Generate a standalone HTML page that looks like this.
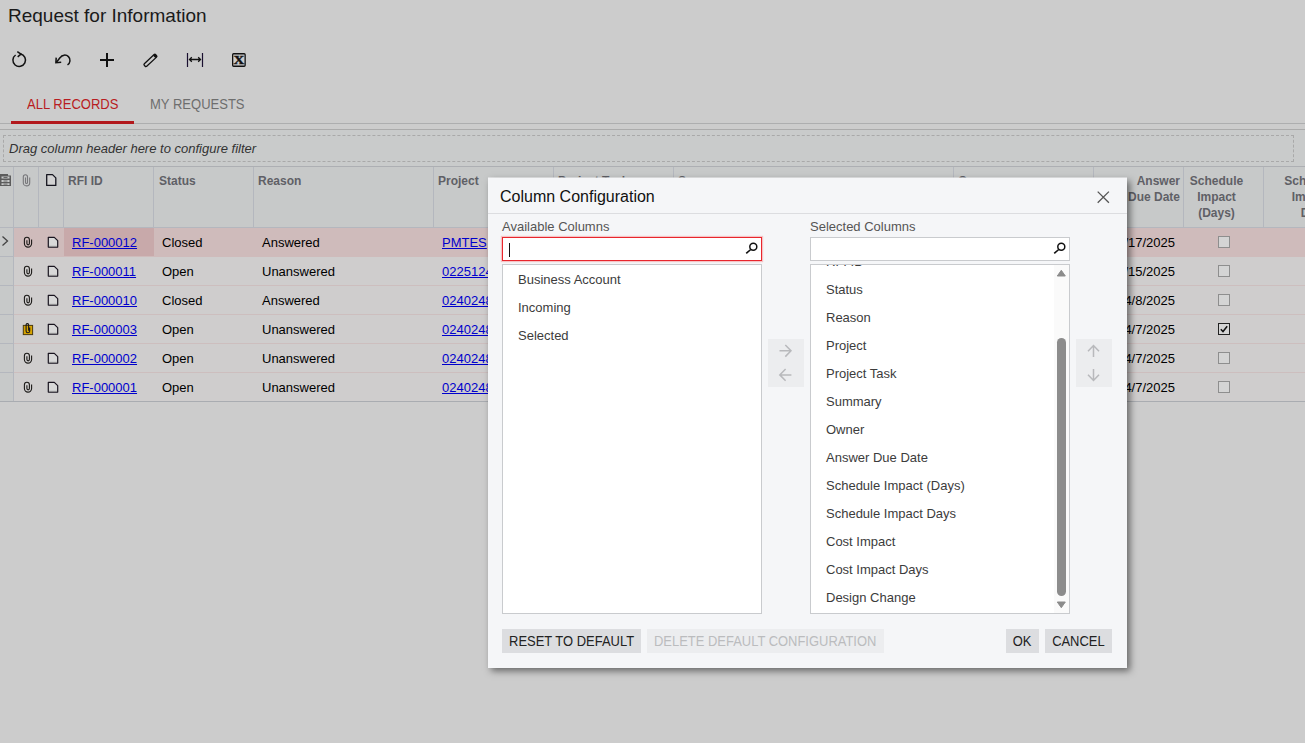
<!DOCTYPE html>
<html><head><meta charset="utf-8">
<style>
*{box-sizing:border-box;margin:0;padding:0}
html,body{width:1305px;height:743px;overflow:hidden}
body{background:#cccccc;font-family:"Liberation Sans",Arial,sans-serif;font-size:13px;color:#000;position:relative}
.abs{position:absolute}
#title{left:8px;top:5px;font-size:19px;line-height:22px;color:#1a1a1a;white-space:nowrap}
.tb{position:absolute;top:50px;width:20px;height:20px}
.tab{position:absolute;top:96px;font-size:14px;transform:scaleX(.93);transform-origin:0 0;line-height:16px;white-space:nowrap}
#tabline{left:0;top:123px;width:1305px;height:1px;background:#adaeaf}
#tabul{left:11px;top:121px;width:123px;height:3px;background:#b2181c}
#gbg{left:0;top:129px;width:1305px;height:273px;background:#c9cbcb;border-top:1px solid #ababab}
#filter{left:3px;top:135px;width:1291px;height:27px;border:1px dashed #a9a9a9;font-style:italic;font-size:13px;line-height:26px;padding-left:5px;color:#333}
#grid{left:0;top:166px;width:1305px;height:236px;background:#cfcfcf;border-top:1px solid #adafb3;border-bottom:1px solid #a9acb1;overflow:hidden}
.hc{position:absolute;top:0;height:61px;border-right:1px solid #b4b7be;border-bottom:1px solid #b4b7be;background:#c7c9c9;font-weight:bold;font-size:12px;color:#5f6066;line-height:16px;padding:6px 5px 0 4px;white-space:nowrap;overflow:hidden}
.row{position:absolute;left:0;width:1305px;height:29px;border-bottom:1px solid #cdbebe;background:#cfcdcd}
.row.sel{background:#cfbbbb;border-bottom-color:#cfbbbb}
.c{position:absolute;top:0;height:28px;line-height:29px;font-size:13px;white-space:nowrap}
.c a{color:#0000cc;text-decoration:underline}
.cb{position:absolute;left:1218px;top:8px;width:12px;height:12px;border:1px solid #8e8e8e;background:#d4d4d4}
.cb svg{position:absolute;left:0;top:0}
.cb.ck{border-color:#222}
.ic{position:absolute;top:6px}
.selc{position:absolute;left:64px;top:0;width:90px;height:28px;background:#c8a9aa}
#rowind{position:absolute;left:0;top:61px;width:14px;height:175px;background:#c7c9c9;border-right:1px solid #b4b7be}
#dlg{left:488px;top:178px;width:639px;height:490px;background:#f5f6f8;box-shadow:3px 3px 7px rgba(0,0,0,.5);}
#dh{left:0;top:0;width:639px;height:36px;border-bottom:1px solid #dcdde0}
#dt{left:12px;top:9px;font-size:16px;line-height:20px;color:#111;white-space:nowrap}
.lbl{position:absolute;top:41px;font-size:13px;line-height:16px;color:#555;white-space:nowrap}
.inp{position:absolute;top:59px;width:260px;height:24px;background:#fff;border:1px solid #c9cbce}
.list{position:absolute;top:86px;width:260px;height:350px;background:#fff;border:1px solid #c9cbce;overflow:hidden}
.it{position:absolute;left:15px;margin-top:1px;font-size:13px;line-height:16px;color:#3c3c3c;white-space:nowrap}
.mid{position:absolute;top:161px;width:36px;height:48px;background:#ecedef}
.btn{position:absolute;top:451px;height:24px;line-height:25px;font-size:14px;background:#dcdde0;color:#222;text-align:center;white-space:nowrap}
.btn span{display:inline-block;transform:scaleX(.925);transform-origin:50% 50%;margin:0 -20px}
.mid svg{position:absolute;left:0;top:0}
.mag{position:absolute;right:2px;top:2px}
#sb{position:absolute;right:0;top:0;width:15px;height:348px;background:#fafafa}
#thumb{position:absolute;left:3px;top:73px;width:9px;height:258px;border-radius:4.5px;background:#8c8c8c}
</style></head><body>
<div id="title" class="abs">Request for Information</div>

<svg class="tb" style="left:9px" viewBox="0 0 20 20"><path d="M11.500 4A6.300 6.300 0 1 1 6.600 5" fill="none" stroke="#111" stroke-width="1.500"/><path d="M8.300 1.700L12 4.100 8.700 6.800" fill="none" stroke="#111" stroke-width="1.500"/></svg>
<svg class="tb" style="left:53px" viewBox="0 0 20 20"><path d="M3.200 12.400L7.200 7.600A5.300 5.300 0 1 1 14.500 14.900" fill="none" stroke="#111" stroke-width="1.500"/><path d="M3.200 7.600L2.900 12.700 8.200 12.200" fill="none" stroke="#111" stroke-width="1.500"/></svg>
<svg class="tb" style="left:97px" viewBox="0 0 20 20"><path d="M10 3v14M3 10h14" fill="none" stroke="#111" stroke-width="2"/></svg>
<svg class="tb" style="left:141px" viewBox="0 0 20 20"><g transform="rotate(-43 9.400 10.400)"><rect x="1.600" y="8.700" width="15.600" height="3.500" rx="1.100" fill="none" stroke="#111" stroke-width="1.300"/><rect x="14.600" y="8.700" width="2.600" height="3.500" rx="0.800" fill="#111"/></g></svg>
<svg class="tb" style="left:185px" viewBox="0 0 20 20"><path d="M2.500 3v14M17.500 3v14" fill="none" stroke="#1a1030" stroke-width="1.200"/><path d="M4.500 9.500h11M6.800 7.300L4.500 9.500l2.300 2.200M13.200 7.300l2.300 2.200-2.300 2.200" fill="none" stroke="#111" stroke-width="1.300"/></svg>
<svg class="tb" style="left:229px" viewBox="0 0 20 20"><rect x="3.650" y="3.750" width="12.500" height="12.500" rx="1" fill="none" stroke="#111" stroke-width="1.300"/><text stroke="#111" stroke-width="0.400" transform="translate(10 14) scale(1.250 1)" text-anchor="middle" font-family="Liberation Serif,serif" font-weight="bold" font-size="12" fill="#111">X</text></svg>

<div class="tab" style="left:27px;color:#b81c22">ALL RECORDS</div>
<div class="tab" style="left:150px;color:#6e6e6e">MY REQUESTS</div>
<div id="tabline" class="abs"></div>
<div id="gbg" class="abs"></div>
<div id="tabul" class="abs"></div>
<div id="filter" class="abs">Drag column header here to configure filter</div>

<div id="grid" class="abs">
  <div class="hc" style="left:0;width:14px"></div>
  <svg class="abs" style="z-index:2;left:0;top:6px" width="12" height="14" viewBox="0 0 12 14"><path d="M0 1h8v1.500h3v10.500H0z" fill="#5c5c5c"/><path d="M1.500 3.500h8v2h-8zM1.500 7h8v2h-8zM1.500 10.300h8v1.700h-8z" fill="#c7c9c9"/><path d="M3.500 4.500h4M3.500 8h4M3.500 11.100h4" stroke="#5c5c5c" stroke-width="0.900"/></svg>
  <svg class="abs" style="z-index:2;left:20px;top:6px" width="12" height="14" viewBox="0 0 12 14"><path d="M9.700 4.500v5.200a3.200 3.200 0 0 1-6.400 0V3.800a2.100 2.100 0 0 1 4.200 0v5.700a1 1 0 0 1-2 0V4.500" fill="none" stroke="#77777a" stroke-width="1.100"/></svg>
  <svg class="abs" style="z-index:2;left:45px;top:6px" width="13" height="14" viewBox="0 0 13 14"><path d="M1.700 1.600h5.800l3.300 3.300v7.500H1.700z" fill="#d2d2d2" stroke="#15151f" stroke-width="1.300" stroke-linejoin="round"/></svg>
  <div class="hc" style="left:14px;width:25px"></div>
  <div class="hc" style="left:39px;width:25px"></div>
  <div class="hc" style="left:64px;width:90px">RFI ID</div>
  <div class="hc" style="left:154px;width:100px;padding-left:5px">Status</div>
  <div class="hc" style="left:254px;width:180px">Reason</div>
  <div class="hc" style="left:434px;width:120px">Project</div>
  <div class="hc" style="left:554px;width:120px">Project Task</div>
  <div class="hc" style="left:674px;width:280px">Summary</div>
  <div class="hc" style="left:954px;width:140px">Owner</div>
  <div class="hc" style="left:1094px;width:90px;text-align:right;padding-right:3px">Answer<br>Due Date</div>
  <div class="hc" style="left:1184px;width:80px;text-align:center;padding-left:0;padding-right:14px">Schedule<br>Impact<br>(Days)</div>
  <div class="hc" style="left:1264px;width:109px;text-align:center;padding-left:0;padding-right:14px">Schedule<br>Impact<br><span style="padding-left:8px">Days</span></div>
  <div class="row sel" style="top:61px"><div class="selc"></div><svg class="ic" style="left:22px" width="12" height="16" viewBox="0 0 12 16"><path d="M9.600 5.400V9.500A3.600 3.600 0 0 1 2.400 9.500V5.800A2.500 2.500 0 0 1 7.400 5.800V9.600A1.250 1.250 0 0 1 4.900 9.600V6.200" fill="none" stroke="#1c1a18" stroke-width="1.100"/></svg><svg class="ic" style="left:46px" width="14" height="16" viewBox="0 0 14 16"><path d="M2.300 3.300h6l3.400 3.400v6.400H2.300z" fill="#d8d8d8" stroke="#1a1520" stroke-width="1.200" stroke-linejoin="round"/><path d="M2.900 12.300h8.200" stroke="#9a9a9a" stroke-width="0.800"/></svg><div class="c" style="left:72px"><a>RF-000012</a></div><div class="c" style="left:162px">Closed</div><div class="c" style="left:262px">Answered</div><div class="c" style="left:442px"><a>PMTES</a></div><div class="c" style="right:130px">4/17/2025</div><div class="cb"></div></div>
  <div class="row" style="top:90px"><svg class="ic" style="left:22px" width="12" height="16" viewBox="0 0 12 16"><path d="M9.600 5.400V9.500A3.600 3.600 0 0 1 2.400 9.500V5.800A2.500 2.500 0 0 1 7.400 5.800V9.600A1.250 1.250 0 0 1 4.900 9.600V6.200" fill="none" stroke="#1c1a18" stroke-width="1.100"/></svg><svg class="ic" style="left:46px" width="14" height="16" viewBox="0 0 14 16"><path d="M2.300 3.300h6l3.400 3.400v6.400H2.300z" fill="#d8d8d8" stroke="#1a1520" stroke-width="1.200" stroke-linejoin="round"/><path d="M2.900 12.300h8.200" stroke="#9a9a9a" stroke-width="0.800"/></svg><div class="c" style="left:72px"><a>RF-000011</a></div><div class="c" style="left:162px">Open</div><div class="c" style="left:262px">Unanswered</div><div class="c" style="left:442px"><a>02251244</a></div><div class="c" style="right:130px">4/15/2025</div><div class="cb"></div></div>
  <div class="row" style="top:119px"><svg class="ic" style="left:22px" width="12" height="16" viewBox="0 0 12 16"><path d="M9.600 5.400V9.500A3.600 3.600 0 0 1 2.400 9.500V5.800A2.500 2.500 0 0 1 7.400 5.800V9.600A1.250 1.250 0 0 1 4.900 9.600V6.200" fill="none" stroke="#1c1a18" stroke-width="1.100"/></svg><svg class="ic" style="left:46px" width="14" height="16" viewBox="0 0 14 16"><path d="M2.300 3.300h6l3.400 3.400v6.400H2.300z" fill="#d8d8d8" stroke="#1a1520" stroke-width="1.200" stroke-linejoin="round"/><path d="M2.900 12.300h8.200" stroke="#9a9a9a" stroke-width="0.800"/></svg><div class="c" style="left:72px"><a>RF-000010</a></div><div class="c" style="left:162px">Closed</div><div class="c" style="left:262px">Answered</div><div class="c" style="left:442px"><a>02402481</a></div><div class="c" style="right:130px">4/8/2025</div><div class="cb"></div></div>
  <div class="row" style="top:148px"><svg class="ic" style="left:21px" width="14" height="16" viewBox="0 0 14 16"><rect x="2.300" y="4.400" width="9.300" height="9.200" fill="#d6a300" stroke="#4a3a10" stroke-width="1"/><path d="M8.700 6.500V10A1.800 1.800 0 0 1 5.100 10V3.600A1.300 1.300 0 0 1 7.600 3.600V9.800" fill="none" stroke="#1c1a18" stroke-width="1.100"/></svg><svg class="ic" style="left:46px" width="14" height="16" viewBox="0 0 14 16"><path d="M2.300 3.300h6l3.400 3.400v6.400H2.300z" fill="#d8d8d8" stroke="#1a1520" stroke-width="1.200" stroke-linejoin="round"/><path d="M2.900 12.300h8.200" stroke="#9a9a9a" stroke-width="0.800"/></svg><div class="c" style="left:72px"><a>RF-000003</a></div><div class="c" style="left:162px">Open</div><div class="c" style="left:262px">Unanswered</div><div class="c" style="left:442px"><a>02402481</a></div><div class="c" style="right:130px">4/7/2025</div><div class="cb ck"><svg width="10" height="10" viewBox="0 0 10 10"><path d="M1.800 5.200l2.200 2.300 4.200-5.200" fill="none" stroke="#111" stroke-width="1.500"/></svg></div></div>
  <div class="row" style="top:177px"><svg class="ic" style="left:22px" width="12" height="16" viewBox="0 0 12 16"><path d="M9.600 5.400V9.500A3.600 3.600 0 0 1 2.400 9.500V5.800A2.500 2.500 0 0 1 7.400 5.800V9.600A1.250 1.250 0 0 1 4.900 9.600V6.200" fill="none" stroke="#1c1a18" stroke-width="1.100"/></svg><svg class="ic" style="left:46px" width="14" height="16" viewBox="0 0 14 16"><path d="M2.300 3.300h6l3.400 3.400v6.400H2.300z" fill="#d8d8d8" stroke="#1a1520" stroke-width="1.200" stroke-linejoin="round"/><path d="M2.900 12.300h8.200" stroke="#9a9a9a" stroke-width="0.800"/></svg><div class="c" style="left:72px"><a>RF-000002</a></div><div class="c" style="left:162px">Open</div><div class="c" style="left:262px">Unanswered</div><div class="c" style="left:442px"><a>02402481</a></div><div class="c" style="right:130px">4/7/2025</div><div class="cb"></div></div>
  <div class="row" style="top:206px;border-bottom-color:#a9acb1"><svg class="ic" style="left:22px" width="12" height="16" viewBox="0 0 12 16"><path d="M9.600 5.400V9.500A3.600 3.600 0 0 1 2.400 9.500V5.800A2.500 2.500 0 0 1 7.400 5.800V9.600A1.250 1.250 0 0 1 4.900 9.600V6.200" fill="none" stroke="#1c1a18" stroke-width="1.100"/></svg><svg class="ic" style="left:46px" width="14" height="16" viewBox="0 0 14 16"><path d="M2.300 3.300h6l3.400 3.400v6.400H2.300z" fill="#d8d8d8" stroke="#1a1520" stroke-width="1.200" stroke-linejoin="round"/><path d="M2.900 12.300h8.200" stroke="#9a9a9a" stroke-width="0.800"/></svg><div class="c" style="left:72px"><a>RF-000001</a></div><div class="c" style="left:162px">Open</div><div class="c" style="left:262px">Unanswered</div><div class="c" style="left:442px"><a>02402481</a></div><div class="c" style="right:130px">4/7/2025</div><div class="cb"></div></div>
  <div id="rowind"><div style="position:absolute;left:0;top:28px;width:13px;height:1px;background:#b4b7be"></div><div style="position:absolute;left:0;top:57px;width:13px;height:1px;background:#b4b7be"></div><div style="position:absolute;left:0;top:86px;width:13px;height:1px;background:#b4b7be"></div><div style="position:absolute;left:0;top:115px;width:13px;height:1px;background:#b4b7be"></div><div style="position:absolute;left:0;top:144px;width:13px;height:1px;background:#b4b7be"></div><svg style="position:absolute;left:1px;top:5px" width="9" height="16" viewBox="0 0 9 16"><path d="M1.500 3.500l5 4.500-5 4.500" fill="none" stroke="#444" stroke-width="1.300"/></svg></div>
</div>

<div id="dlg" class="abs">
  <div class="abs" style="left:0;top:-1px;width:639px;height:1px;background:rgba(245,246,248,.5)"></div>
  <div id="dh" class="abs"></div>
  <div id="dt" class="abs">Column Configuration</div>
  <svg class="abs" style="left:607px;top:11px" width="16" height="16" viewBox="0 0 16 16"><path d="M2.700 2.600l11.200 11.200M13.900 2.600l-11.200 11.200" stroke="#555" stroke-width="1.300" fill="none"/></svg>
  <div class="lbl" style="left:14px">Available Columns</div>
  <div class="lbl" style="left:322px">Selected Columns</div>
  <div class="inp" style="left:14px;border:1px solid #e8262d;box-shadow:0 0 1px 1px #f6c3c5"><svg class="mag" width="16" height="18" viewBox="0 0 16 18"><circle cx="10.300" cy="6.800" r="3.500" fill="none" stroke="#111" stroke-width="1.500"/><path d="M7.700 9.500L3.200 13.400" stroke="#111" stroke-width="1.600" fill="none"/></svg><div style="position:absolute;left:6px;top:5px;width:1px;height:14px;background:#111"></div></div>
  <div class="inp" style="left:322px"><svg class="mag" width="16" height="18" viewBox="0 0 16 18"><circle cx="10.300" cy="6.800" r="3.500" fill="none" stroke="#111" stroke-width="1.500"/><path d="M7.700 9.500L3.200 13.400" stroke="#111" stroke-width="1.600" fill="none"/></svg></div>
  <div class="list" style="left:14px">
    <div class="it" style="top:6px">Business Account</div>
    <div class="it" style="top:34px">Incoming</div>
    <div class="it" style="top:62px">Selected</div>
  </div>
  <div class="list" style="left:322px">
    <div class="it" style="top:-12px">RFI ID</div>
    <div class="it" style="top:16px">Status</div>
    <div class="it" style="top:44px">Reason</div>
    <div class="it" style="top:72px">Project</div>
    <div class="it" style="top:100px">Project Task</div>
    <div class="it" style="top:128px">Summary</div>
    <div class="it" style="top:156px">Owner</div>
    <div class="it" style="top:184px">Answer Due Date</div>
    <div class="it" style="top:212px">Schedule Impact (Days)</div>
    <div class="it" style="top:240px">Schedule Impact Days</div>
    <div class="it" style="top:268px">Cost Impact</div>
    <div class="it" style="top:296px">Cost Impact Days</div>
    <div class="it" style="top:324px">Design Change</div>
    <div id="sb"><svg style="position:absolute;left:2px;top:4px" width="10" height="8" viewBox="0 0 10 8"><path d="M5.300 1.300L9.300 7H1.300z" fill="#8b8b8b" stroke="#8b8b8b" stroke-width="1" stroke-linejoin="round"/></svg><div id="thumb"></div><svg style="position:absolute;left:2px;top:336px" width="10" height="8" viewBox="0 0 10 8"><path d="M5.300 6.700L9.300 1H1.300z" fill="#8b8b8b" stroke="#8b8b8b" stroke-width="1" stroke-linejoin="round"/></svg></div>
  </div>
  <div class="mid" style="left:280px"><svg width="36" height="48" viewBox="0 0 36 48"><path d="M11.500 11.800H23M17.300 6L23 11.800 17.300 17.600M23.400 35.900H11.800M17.600 30L11.800 35.900 17.600 41.700" fill="none" stroke="#b8b9bc" stroke-width="1.500"/></svg></div>
  <div class="mid" style="left:588px"><svg width="36" height="48" viewBox="0 0 36 48"><path d="M17.500 17.900V6.500M12 12.300L17.500 6.500 23 12.300M17.500 30V41.500M12 35.700L17.500 41.500 23 35.700" fill="none" stroke="#b8b9bc" stroke-width="1.500"/></svg></div>
  <div class="btn" style="left:14px;width:139px"><span>RESET TO DEFAULT</span></div>
  <div class="btn" style="left:159px;width:237px;background:#ecedef;color:#bbbcbe"><span>DELETE DEFAULT CONFIGURATION</span></div>
  <div class="btn" style="left:518px;width:33px"><span>OK</span></div>
  <div class="btn" style="left:557px;width:67px"><span>CANCEL</span></div>
</div>
</body></html>
